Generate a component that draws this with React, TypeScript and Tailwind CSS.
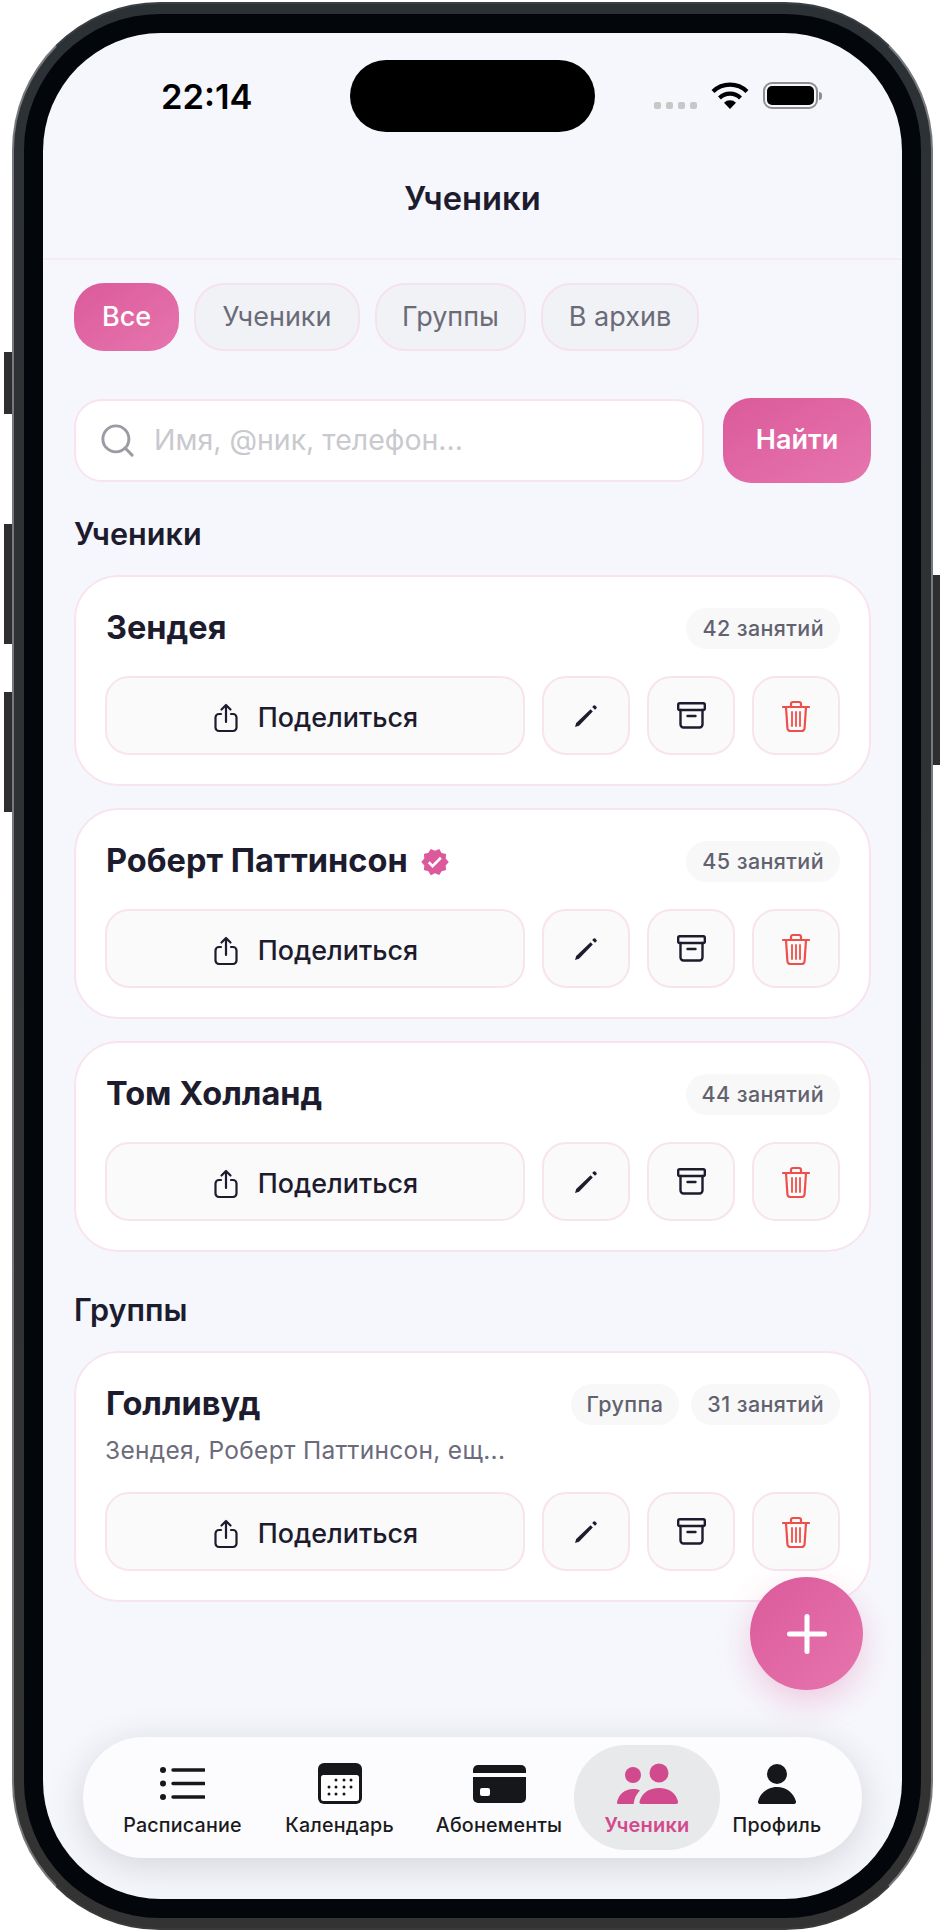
import { Search, Plus } from 'lucide-react';
import { MdVerified } from 'react-icons/md';

function ShareIcon() {
    return (
        <svg width="24" height="30" viewBox="0 0 24 30" fill="none" stroke="#1c1c2e" strokeWidth="2.2" strokeLinecap="round" strokeLinejoin="round">
            <path d="M7 11H5a3.5 3.5 0 0 0-3.5 3.5v10A3.5 3.5 0 0 0 5 28h14a3.5 3.5 0 0 0 3.5-3.5v-10A3.5 3.5 0 0 0 19 11h-2" />
            <path d="M12 19V2M7.5 6.5 12 2l4.5 4.5" />
        </svg>
    );
}

function PencilIcon() {
    return (
        <svg width="24" height="24" viewBox="0 0 24 24" fill="#1c1c2e">
            <path d="M1 23l1.2-4L16.6 5.2l2.2 2.2L5 21.8z" />
            <path d="M18.2 3l1.4-1.4a1.1 1.1 0 0 1 1.6 0l1.2 1.2a1.1 1.1 0 0 1 0 1.6L21 5.8z" />
        </svg>
    );
}

function ArchiveIcon() {
    return (
        <svg width="29" height="27" viewBox="0 0 29 27" fill="none" stroke="#1c1c2e" strokeWidth="2.4" strokeLinecap="round" strokeLinejoin="round">
            <rect x="1.2" y="1.2" width="26.6" height="6.8" rx="1.5" />
            <path d="M3.5 8v14.5a3 3 0 0 0 3 3h16a3 3 0 0 0 3-3V8" />
            <path d="M10.5 14h8" />
        </svg>
    );
}

function TrashIcon() {
    return (
        <svg width="28" height="32" viewBox="0 0 28 32" fill="none" stroke="#ef4f4a" strokeWidth="2.2" strokeLinecap="round" strokeLinejoin="round">
            <path d="M1 7h26" />
            <path d="M9 7V4a2 2 0 0 1 2-2h6a2 2 0 0 1 2 2v3" />
            <path d="M4 7l1.4 21a3 3 0 0 0 3 3h11.2a3 3 0 0 0 3-3L24 7" />
            <path d="M10 12v14M14 12v14M18 12v14" strokeWidth="1.8" />
        </svg>
    );
}

function ListIcon() {
    return (
        <svg width="45" height="34" viewBox="0 0 45 34" fill="#16171b">
            <circle cx="3" cy="3" r="3" />
            <circle cx="3" cy="16.5" r="3" />
            <circle cx="3" cy="30" r="3" />
            <path d="M13 3h31M13 16.5h31M13 30h31" stroke="#16171b" strokeWidth="3.4" strokeLinecap="round" />
        </svg>
    );
}

function CalendarIcon() {
    const dots = [
        [18, 17], [26, 17], [33, 17],
        [11, 24], [18, 24], [26, 24], [33, 24],
        [11, 31], [18, 31], [26, 31],
    ];
    return (
        <svg width="44" height="41" viewBox="0 0 44 41">
            <rect width="44" height="41" rx="6" fill="#16171b" />
            <rect x="3" y="12" width="38" height="26" rx="2.5" fill="#fff" />
            {dots.map(([cx, cy]) => (
                <circle key={`${cx}-${cy}`} cx={cx} cy={cy} r="1.5" fill="#16171b" />
            ))}
        </svg>
    );
}

function CardIcon() {
    return (
        <svg width="53" height="38" viewBox="0 0 53 38">
            <rect width="53" height="38" rx="5" fill="#16171b" />
            <rect y="8" width="53" height="4" fill="#fff" />
            <rect x="7" y="23" width="10" height="8" rx="2" fill="#fff" />
        </svg>
    );
}

function PeopleIcon() {
    return (
        <svg width="61" height="41" viewBox="0 0 61 41" fill="#d24a8e">
            <circle cx="16" cy="12" r="8" />
            <circle cx="42" cy="10" r="9.5" />
            <path d="M1.5 41A1.5 1.5 0 0 1 0 39c2-8 8-13 16-13 2.5 0 5 .4 7 1.5-2.5 2.5-4.5 5.5-5.5 9-.4 1.8-.7 3.2-.9 4.5z" />
            <path d="M24.5 41a2 2 0 0 1-2-2.6C25 30 32 25 42 25s17 5 19 13.4a2 2 0 0 1-2 2.6z" />
        </svg>
    );
}

function PersonIcon() {
    return (
        <svg width="38" height="40" viewBox="0 0 38 40" fill="#16171b">
            <circle cx="19" cy="10" r="10" />
            <path d="M2 40a2 2 0 0 1-2-2.5C2 29 10 23 19 23s17 6 19 14.5a2 2 0 0 1-2 2.5z" />
        </svg>
    );
}

function WifiIcon() {
    return (
        <svg width="38" height="27" viewBox="0 0 38 27" fill="none" stroke="#000" strokeWidth="4.2">
            <path d="M2 9.5a24.5 24.5 0 0 1 34 0" />
            <path d="M8.5 16a15 15 0 0 1 21 0" />
            <path d="M13 20.8a8.6 8.6 0 0 1 12 0L19 27z" fill="#000" stroke="none" />
        </svg>
    );
}

function BatteryIcon() {
    return (
        <div className="flex items-center gap-[1px]">
            <div className="flex h-[27px] w-[55px] rounded-[9px] border-2 border-[#8f8f8f] p-[2px]">
                <div className="flex-1 rounded-[5px] bg-black" />
            </div>
            <div className="h-[8px] w-[3px] rounded-r-full bg-[#8f8f8f]" />
        </div>
    );
}

function Badge({ children }: { children: string }) {
    return (
        <span className="flex h-[41px] items-center rounded-full bg-[#f8f8f9] px-[16px] text-[21.5px] leading-none font-medium tracking-[0.4px] text-[#62626f]">
            {children}
        </span>
    );
}

function IconButton({ children }: { children: React.ReactNode }) {
    return (
        <button className="flex h-[79px] w-[88px] items-center justify-center rounded-[24px] border-2 border-[#f8e4ee] bg-[#fafafa]">
            {children}
        </button>
    );
}

function PersonCard({
    name,
    verified,
    badges,
    members,
}: {
    name: string;
    verified?: boolean;
    badges: string[];
    members?: string;
}) {
    return (
        <div className="rounded-[44px] border-2 border-[#f8e4ee] bg-white px-[29px] pt-[30px] pb-[29px]">
            <div className="flex h-[43px] items-center justify-between">
                <div className="flex items-center gap-[12px] pl-[1px]">
                    <span className="text-[32.5px] leading-none font-bold text-[#1c1c2e]">{name}</span>
                    {verified && <MdVerified className="h-[30px] w-[30px] text-[#dc5a9b]" />}
                </div>
                <div className="flex gap-[12px]">
                    {badges.map((badge) => (
                        <Badge key={badge}>{badge}</Badge>
                    ))}
                </div>
            </div>
            {members && (
                <p className="mt-[11px] pb-[3px] text-[24.5px] leading-[26px] tracking-[0.3px] text-[#6b6b7b]">{members}</p>
            )}
            <div className="mt-[26px] flex gap-[17px]">
                <button className="flex h-[79px] flex-1 items-center justify-center gap-[20px] rounded-[24px] border-2 border-[#f8e4ee] bg-[#fafafa] pt-[4px] pl-[2px] text-[26.9px] font-medium text-[#1c1c2e]">
                    <ShareIcon />
                    Поделиться
                </button>
                <IconButton>
                    <PencilIcon />
                </IconButton>
                <IconButton>
                    <ArchiveIcon />
                </IconButton>
                <IconButton>
                    <TrashIcon />
                </IconButton>
            </div>
        </div>
    );
}

export default function App() {
    return (
        <div className="relative h-[1932px] w-[944px] bg-white pt-[2px] pl-[12px] font-[Inter,sans-serif]">
            {/* side buttons */}
            <div className="absolute top-[352px] left-[4px] h-[62px] w-[8px] bg-[#2e2e2e]" />
            <div className="absolute top-[524px] left-[4px] h-[120px] w-[8px] bg-[#2e2e2e]" />
            <div className="absolute top-[692px] left-[4px] h-[120px] w-[8px] bg-[#2e2e2e]" />
            <div className="absolute top-[575px] left-[933px] h-[190px] w-[7px] bg-[#2e2e2e]" />

            <div className="h-[1928px] w-[921px] rounded-[148px] border-2 border-x-[#77797c] border-t-[#3a3f44] border-b-[#3a3a3a] bg-linear-to-b from-[#2c3135] to-[#333333] p-[10px]">
                <div className="h-full rounded-[136px] bg-[#03060a] p-[19px]">
                    <div className="relative flex h-full flex-col overflow-hidden rounded-[118px] bg-[#f6f7fc]">
                        {/* status bar */}
                        <div className="flex h-[125px] shrink-0 items-start justify-between pt-[47px] pr-[80px] pl-[118px]">
                            <span className="text-[34.5px] leading-[34px] font-semibold text-black">22:14</span>
                            <div className="flex items-center gap-[14px] pt-[2px]">
                                <div className="mt-[20px] flex gap-[5px]">
                                    <div className="h-[7px] w-[7px] rounded-[2px] bg-[#c7c7c7]" />
                                    <div className="h-[7px] w-[7px] rounded-[2px] bg-[#c7c7c7]" />
                                    <div className="h-[7px] w-[7px] rounded-[2px] bg-[#c7c7c7]" />
                                    <div className="h-[7px] w-[7px] rounded-[2px] bg-[#c7c7c7]" />
                                </div>
                                <WifiIcon />
                                <BatteryIcon />
                            </div>
                        </div>
                        <div className="absolute top-[27px] left-[307px] h-[72px] w-[245px] rounded-full bg-black" />

                        {/* header */}
                        <div className="flex h-[102px] shrink-0 items-center justify-center border-b-2 border-[#f5edf2] pb-[20px]">
                            <h1 className="text-[32.7px] leading-none font-semibold text-[#1c1c2e]">Ученики</h1>
                        </div>

                        <div className="flex-1 px-[31px] pt-[23px]">
                            {/* filters */}
                            <div className="flex gap-[15px]">
                                <button className="h-[68px] w-[105px] rounded-[30px] bg-linear-to-br from-[#db5a9a] to-[#e675ae] text-[27px] font-medium text-white">
                                    Все
                                </button>
                                <button className="h-[68px] w-[166px] rounded-[30px] border-2 border-[#f5e2ec] bg-[#f1f2f6] text-[27px] text-[#6b6b78]">
                                    Ученики
                                </button>
                                <button className="h-[68px] w-[151px] rounded-[30px] border-2 border-[#f5e2ec] bg-[#f1f2f6] text-[27px] text-[#6b6b78]">
                                    Группы
                                </button>
                                <button className="h-[68px] w-[158px] rounded-[30px] border-2 border-[#f5e2ec] bg-[#f1f2f6] text-[27px] text-[#6b6b78]">
                                    В архив
                                </button>
                            </div>

                            {/* search */}
                            <div className="mt-[47px] flex items-center gap-[19px]">
                                <div className="flex h-[83px] flex-1 items-center gap-[17px] rounded-[28px] border-2 border-[#f8e4ee] bg-white pl-[22px]">
                                    <Search className="h-[39px] w-[39px] text-[#9b9ba3]" strokeWidth={1.8} />
                                    <span className="text-[28.5px] text-[#c9c9ce]">Имя, @ник, телефон...</span>
                                </div>
                                <button className="h-[85px] w-[148px] rounded-[28px] bg-linear-to-br from-[#db5a9a] to-[#e675ae] text-[27px] font-semibold text-white">
                                    Найти
                                </button>
                            </div>

                            <h2 className="mt-[33px] mb-[24px] text-[30.6px] leading-[35px] font-semibold text-[#1c1c2e]">Ученики</h2>
                            <div className="flex flex-col gap-[22px]">
                                <PersonCard name="Зендея" badges={['42 занятий']} />
                                <PersonCard name="Роберт Паттинсон" verified badges={['45 занятий']} />
                                <PersonCard name="Том Холланд" badges={['44 занятий']} />
                            </div>

                            <h2 className="mt-[40px] mb-[24px] text-[30.6px] leading-[35px] font-semibold text-[#1c1c2e]">Группы</h2>
                            <PersonCard name="Голливуд" badges={['Группа', '31 занятий']} members="Зендея, Роберт Паттинсон, ещ..." />
                        </div>

                        {/* add button */}
                        <button className="absolute right-[39px] bottom-[209px] flex h-[113px] w-[113px] items-center justify-center rounded-full bg-linear-to-br from-[#db5a9a] to-[#e675ae] shadow-[0_12px_32px_rgba(220,90,155,0.28)]">
                            <Plus className="h-[60px] w-[60px] text-white" strokeWidth={2} />
                        </button>

                        {/* tab bar */}
                        <nav className="relative mx-[40px] mb-[41px] flex h-[121px] shrink-0 items-center rounded-[60px] bg-[#fcfcfe] shadow-[0_8px_40px_rgba(0,0,0,0.14)]">
                            <div className="ml-[34px] flex w-[131px] flex-col items-center gap-[9px] pt-[5px]">
                                <div className="flex h-[41px] items-center"><ListIcon /></div>
                                <span className="text-[19.7px] leading-[24px] font-medium tracking-[0.2px] text-[#1a1b20]">Расписание</span>
                            </div>
                            <div className="ml-[32px] flex w-[119px] flex-col items-center gap-[9px] pt-[5px]">
                                <div className="flex h-[41px] items-center"><CalendarIcon /></div>
                                <span className="text-[19.7px] leading-[24px] font-medium tracking-[0.2px] text-[#1a1b20]">Календарь</span>
                            </div>
                            <div className="ml-[32px] flex w-[136px] flex-col items-center gap-[9px] pt-[5px]">
                                <div className="flex h-[41px] items-center"><CardIcon /></div>
                                <span className="text-[19.7px] leading-[24px] font-medium tracking-[0.2px] text-[#1a1b20]">Абонементы</span>
                            </div>
                            <div className="ml-[7px] flex h-[105px] w-[146px] flex-col items-center justify-center gap-[9px] rounded-[52px] bg-[#e8e9eb] pt-[5px]">
                                <div className="flex h-[41px] items-center"><PeopleIcon /></div>
                                <span className="text-[20px] leading-[24px] font-semibold tracking-[0.2px] text-[#d24a8e]">Ученики</span>
                            </div>
                            <div className="flex w-[114px] flex-col items-center gap-[9px] pt-[5px]">
                                <div className="flex h-[41px] items-center"><PersonIcon /></div>
                                <span className="text-[19.7px] leading-[24px] font-medium tracking-[0.2px] text-[#1a1b20]">Профиль</span>
                            </div>
                        </nav>
                    </div>
                </div>
            </div>
        </div>
    );
}
